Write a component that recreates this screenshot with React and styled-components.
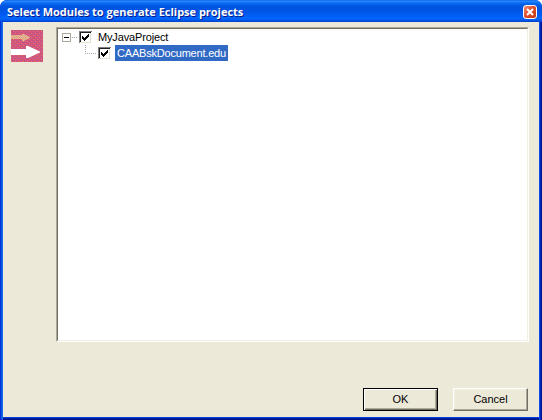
import React from 'react';
import styled, { createGlobalStyle } from 'styled-components';

const GlobalStyle = createGlobalStyle`
  * { box-sizing: border-box; }
  html, body { margin: 0; background: #fff; overflow: hidden; }
  svg { display: block; flex: none; }
`;

const Window = styled.div`
  width: 542px;
  height: 420px;
  display: flex;
  flex-direction: column;
  overflow: hidden;
  border-radius: 7px 7px 0 0;
  background: #0842d8;
  font-family: "Liberation Sans", Arial, sans-serif;
  font-size: 11px;
  color: #000;
  user-select: none;
`;

const TitleBar = styled.header`
  height: 22px;
  flex: none;
  display: flex;
  align-items: center;
  justify-content: space-between;
  padding: 2px 5px 0 7px;
  background: linear-gradient(180deg, #0a5ae0 0, #2a8cff 1px, #0a6cf5 3px, #0055e0 6px, #0054e3 10px, #005cf4 15px, #0066ff 18px, #005bf0 20px, #003fc8 22px);
`;

const Title = styled.h1`
  margin: 0;
  font: bold 11px/16px "Open Sans", sans-serif;
  letter-spacing: -0.01px;
  white-space: nowrap;
  color: #fff;
  text-shadow: 1px 1px 0 #0a1883;
`;

const CloseButton = styled.button`
  width: 14px;
  height: 14px;
  padding: 0;
  display: grid;
  place-items: center;
  border: 1px solid #fff;
  border-radius: 3px;
  background: linear-gradient(135deg, #f09078 0%, #e0502c 45%, #c23a10 100%);
`;

const Frame = styled.div`
  flex: 1;
  min-height: 0;
  display: flex;
  flex-direction: column;
  border: solid transparent;
  border-width: 0 3px 3px;
  background:
    linear-gradient(90deg, #0831d9 0 1px, #0855dd 1px 2px, #166aee 2px 3px, transparent 3px calc(100% - 3px), #0a48e8 calc(100% - 3px) calc(100% - 2px), #0029b8 calc(100% - 2px) calc(100% - 1px), #00138c calc(100% - 1px)) border-box,
    linear-gradient(0deg, #00138c 0 1px, #001ea0 1px 2px, #0441d8 2px 3px, #ece9d8 3px) border-box;
`;

const Content = styled.main`
  display: flex;
  gap: 13px;
  padding: 5px 10px 0 8px;
`;

const IconSlot = styled.div`
  padding-top: 3px;
  width: 32px;
  flex: none;
`;

const TreePanel = styled.div`
  flex: 1;
  height: 315px;
  border: 1px solid;
  border-color: #aca899 #fff #fff #aca899;
`;

const TreeInner = styled.div`
  height: 100%;
  border: 1px solid;
  border-color: #716f64 #f1efe2 #f1efe2 #716f64;
  background: #fff;
`;

const TreeRow = styled.div`
  display: flex;
  align-items: center;
  height: 16px;
  padding-left: 4px;
`;

const NodeLabel = styled.span`
  height: 16px;
  margin-left: 4px;
  padding: 0 2px;
  line-height: 16px;
  letter-spacing: ${(p) => p.$spacing}px;
  width: ${(p) => p.$width}px;
  white-space: nowrap;
  color: ${(p) => (p.$selected ? '#fff' : '#000')};
  background: ${(p) => (p.$selected ? '#316ac5' : 'transparent')};
`;

const Footer = styled.footer`
  display: flex;
  justify-content: flex-end;
  gap: 15px;
  margin-top: auto;
  padding: 0 11px 6px 0;
`;

const Button = styled.button`
  width: 75px;
  height: 23px;
  padding: 0 0 1px;
  font: 11px "Liberation Sans", Arial, sans-serif;
  color: #000;
  background: #ece9d8;
  border: 1px solid;
  border-color: #fff #716f64 #716f64 #fff;
  box-shadow: inset -1px -1px #aca899, inset 1px 1px #f1efe2;
  ${(p) => p.$primary && `
    border-color: #000;
    box-shadow: inset 1px 1px #fff, inset -1px -1px #716f64, inset -2px -2px #aca899;
  `}
`;

const CloseGlyph = () => (
  <svg width="8" height="8" viewBox="0 0 8 8">
    <path d="M1 1L7 7M7 1L1 7" stroke="#fff" strokeWidth="2" />
  </svg>
);

const ArrowsIcon = () => (
  <svg width="32" height="32" viewBox="0 0 32 32">
    <defs>
      <pattern id="dither" width="4" height="4" patternUnits="userSpaceOnUse">
        <rect width="4" height="4" fill="#d8527a" />
        <path d="M0 0h1v1H0zM2 2h1v1H2zM3 0h1v1H3zM1 2h1v1H1z" fill="#b85c90" />
        <path d="M2 1h1v1H2zM0 3h1v1H0z" fill="#dc7868" />
      </pattern>
      <pattern id="sand" width="2" height="2" patternUnits="userSpaceOnUse">
        <rect width="2" height="2" fill="#e0a088" />
        <path d="M0 0h1v1H0zM1 1h1v1H1z" fill="#e2bc90" />
      </pattern>
    </defs>
    <rect width="32" height="32" fill="url(#dither)" />
    <path d="M0 5H11V4H13L19 7V8L13 11H11V9H0z" fill="url(#sand)" />
    <path d="M0 19H15V16H17L29 21.5V22.5L17 28H15V25H0z" fill="#fff" />
  </svg>
);

const Expander = () => (
  <svg width="17" height="16" viewBox="0 0 17 16" shapeRendering="crispEdges">
    <rect x=".5" y="4.5" width="8" height="8" fill="#fff" stroke="#aca899" />
    <path d="M2 8.5h5" stroke="#000" />
    <path d="M10 8.5h6" stroke="#aca899" strokeDasharray="1 1" />
  </svg>
);

const Branch = () => (
  <svg width="36" height="16" viewBox="0 0 36 16" shapeRendering="crispEdges">
    <path d="M23.5 0v9M23 8.5h12" fill="none" stroke="#aca899" strokeDasharray="1 1" />
  </svg>
);

const CheckBox = () => (
  <svg width="13" height="16" viewBox="0 0 13 16" shapeRendering="crispEdges">
    <rect y="2" width="13" height="13" fill="#fff" />
    <path d="M0 14V2h13v1H1v11z" fill="#808080" />
    <path d="M1 13V3h11v1H2v9z" fill="#202020" />
    <path d="M2 13h9V4h1v10H1v-1z" fill="#e4e0d0" />
    <path d="M3 7h1v1h1v1h1V8h1V7h1V6h1V5h1v3H9v1H8v1H7v1H6v1H5v-1H4v-1H3z" fill="#000" />
  </svg>
);

export default function App() {
  return (
    <>
      <GlobalStyle />
      <Window>
        <TitleBar>
          <Title>Select Modules to generate Eclipse projects</Title>
          <CloseButton aria-label="Close"><CloseGlyph /></CloseButton>
        </TitleBar>
        <Frame>
          <Content>
            <IconSlot><ArrowsIcon /></IconSlot>
            <TreePanel>
              <TreeInner>
                <TreeRow>
                  <Expander />
                  <CheckBox />
                  <NodeLabel $width={74} $spacing={-0.15}>MyJavaProject</NodeLabel>
                </TreeRow>
                <TreeRow>
                  <Branch />
                  <CheckBox />
                  <NodeLabel $width={113} $spacing={-0.2} $selected>CAABskDocument.edu</NodeLabel>
                </TreeRow>
              </TreeInner>
            </TreePanel>
          </Content>
          <Footer>
            <Button $primary>OK</Button>
            <Button>Cancel</Button>
          </Footer>
        </Frame>
      </Window>
    </>
  );
}
